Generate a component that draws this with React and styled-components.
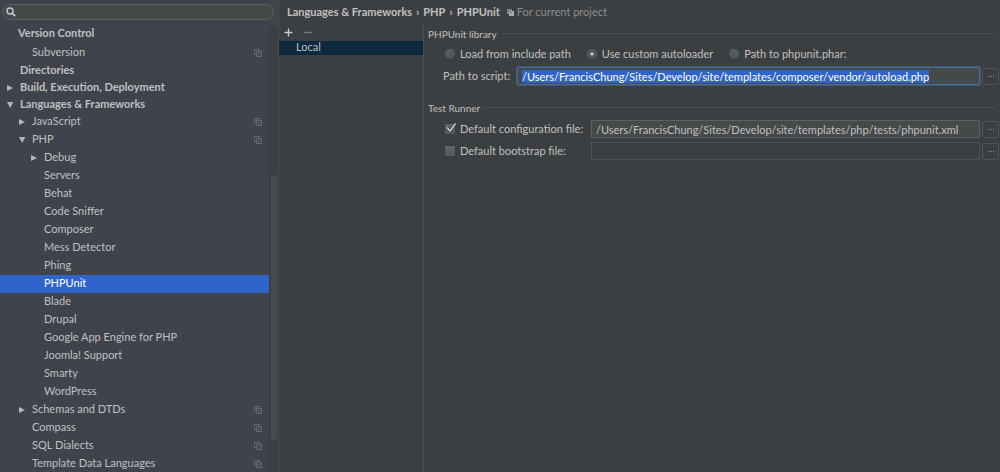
import React, { useEffect, useRef, useState } from 'react';
import styled, { createGlobalStyle } from 'styled-components';

const TREE = [
  { label: 'Subversion', depth: 1, shared: true },
  { label: 'Directories', depth: 0 },
  { label: 'Build, Execution, Deployment', depth: 0, arrow: 'closed' },
  { label: 'Languages & Frameworks', depth: 0, arrow: 'open' },
  { label: 'JavaScript', depth: 1, arrow: 'closed', shared: true },
  { label: 'PHP', depth: 1, arrow: 'open', shared: true },
  { label: 'Debug', depth: 2, arrow: 'closed' },
  { label: 'Servers', depth: 2 },
  { label: 'Behat', depth: 2 },
  { label: 'Code Sniffer', depth: 2 },
  { label: 'Composer', depth: 2 },
  { label: 'Mess Detector', depth: 2 },
  { label: 'Phing', depth: 2 },
  { label: 'PHPUnit', depth: 2 },
  { label: 'Blade', depth: 2 },
  { label: 'Drupal', depth: 2 },
  { label: 'Google App Engine for PHP', depth: 2 },
  { label: 'Joomla! Support', depth: 2 },
  { label: 'Smarty', depth: 2 },
  { label: 'WordPress', depth: 2 },
  { label: 'Schemas and DTDs', depth: 1, arrow: 'closed', shared: true },
  { label: 'Compass', depth: 1, shared: true },
  { label: 'SQL Dialects', depth: 1, shared: true },
  { label: 'Template Data Languages', depth: 1, shared: true },
];

const LOADERS = [
  { id: 'include', label: 'Load from include path' },
  { id: 'autoloader', label: 'Use custom autoloader' },
  { id: 'phar', label: 'Path to phpunit.phar:' },
];

function SearchIcon() {
  return (
    <svg width="10" height="10" viewBox="0 0 10 10" fill="none" stroke="#c4c6c8">
      <circle cx="4" cy="4" r="3" strokeWidth="1.4" />
      <path d="M6.2 6.2L9.2 9.2" strokeWidth="1.8" />
    </svg>
  );
}

function Arrow({ open }) {
  return (
    <svg width="8" height="8" viewBox="0 0 8 8" fill="#b4b6b8">
      <path d={open ? 'M1 1H7.4L4.2 7Z' : 'M1 1L7 4L1 7Z'} />
    </svg>
  );
}

function SharedIcon() {
  return (
    <svg width="8" height="8" viewBox="0 0 8 8" fill="none" stroke="#666a71">
      <path d="M2 5.5H0.5V0.5H5.5V2" />
      <path d="M2.5 2.5H7.5V7.5H2.5Z" />
      <path d="M4 4.5H6M4 6H6" strokeWidth="0.8" />
    </svg>
  );
}

function ProjectIcon() {
  return (
    <svg width="7" height="7" viewBox="0 0 7 7">
      <path d="M0 0H5V2H2V5H0Z" fill="#85888b" />
      <path d="M2 2H7V7H2Z" fill="#a9acae" />
      <path d="M1.5 1.5L4.5 4.5" stroke="#5d6164" />
    </svg>
  );
}

function Dots() {
  return (
    <svg width="6" height="1" viewBox="0 0 6 1" fill="#96989a">
      <path d="M0 0H1V1H0ZM2.5 0H3.5V1H2.5ZM5 0H6V1H5Z" />
    </svg>
  );
}

function Tick() {
  return (
    <TickMark width="12" height="12" viewBox="0 0 12 12" fill="none">
      <path d="M2 5.5L5 9L10.5 1.5" stroke="#2c2e2f" strokeWidth="2.6" />
      <path d="M2 5.5L5 9L10.5 1.5" stroke="#d0d2d3" strokeWidth="1.5" />
    </TickMark>
  );
}

function App() {
  const [selected, setSelected] = useState('PHPUnit');
  const [loader, setLoader] = useState('autoloader');
  const [script, setScript] = useState(
    '/Users/FrancisChung/Sites/Develop/site/templates/composer/vendor/autoload.php',
  );
  const [config, setConfig] = useState(
    '/Users/FrancisChung/Sites/Develop/site/templates/php/tests/phpunit.xml',
  );
  const [useConfig, setUseConfig] = useState(true);
  const [bootstrap, setBootstrap] = useState('');
  const [useBootstrap, setUseBootstrap] = useState(false);
  const scriptRef = useRef(null);

  useEffect(() => {
    scriptRef.current.focus();
    scriptRef.current.select();
  }, []);

  return (
    <>
      <GlobalStyle />
      <Window>
        <Sidebar>
          <SearchBox>
            <SearchIcon />
            <SearchInput type="search" aria-label="Search settings" />
          </SearchBox>
          <TreeArea>
            <TreePane>
              <TreeHeading>Version Control</TreeHeading>
              <TreeList>
                {TREE.map((item) => (
                  <li key={item.label}>
                    <TreeRow
                      type="button"
                      $depth={item.depth}
                      $selected={item.label === selected}
                      onClick={() => setSelected(item.label)}
                    >
                      <ArrowSlot>
                        {item.arrow && <Arrow open={item.arrow === 'open'} />}
                      </ArrowSlot>
                      <TreeLabel>{item.label}</TreeLabel>
                      {item.shared && <SharedIcon />}
                    </TreeRow>
                  </li>
                ))}
              </TreeList>
            </TreePane>
            <ScrollTrack>
              <ScrollThumb />
            </ScrollTrack>
          </TreeArea>
        </Sidebar>

        <Main>
          <Breadcrumb>
            <BreadcrumbPath>
              <span>Languages &amp; Frameworks</span>
              <span>›</span>
              <span>PHP</span>
              <span>›</span>
              <span>PHPUnit</span>
            </BreadcrumbPath>
            <ProjectIcon />
            <BreadcrumbNote>For current project</BreadcrumbNote>
          </Breadcrumb>
          <Content>
            <Profiles>
              <Toolbar>
                <ToolButton type="button" aria-label="Add">
                  <svg width="9" height="9" viewBox="0 0 9 9" stroke="#c8cacb">
                    <path d="M4.5 0.5V8.5M0.5 4.5H8.5" strokeWidth="1.4" />
                  </svg>
                </ToolButton>
                <ToolButton type="button" aria-label="Remove" disabled>
                  <svg width="9" height="9" viewBox="0 0 9 9" stroke="#77797b">
                    <path d="M0.5 4.5H8.5" strokeWidth="1.4" />
                  </svg>
                </ToolButton>
              </Toolbar>
              <ProfileButton type="button">Local</ProfileButton>
            </Profiles>

            <Form>
              <Group>
                <GroupTitle>PHPUnit library</GroupTitle>
                <RadioRow role="radiogroup" aria-label="PHPUnit library">
                  {LOADERS.map((item) => (
                    <OptionLabel key={item.id}>
                      <Radio
                        type="radio"
                        name="loader"
                        checked={loader === item.id}
                        onChange={() => setLoader(item.id)}
                      />
                      {item.label}
                    </OptionLabel>
                  ))}
                </RadioRow>
                <ScriptRow>
                  <label htmlFor="script">Path to script:</label>
                  <TextInput
                    id="script"
                    ref={scriptRef}
                    type="text"
                    spellCheck={false}
                    value={script}
                    onChange={(e) => setScript(e.target.value)}
                  />
                  <BrowseButton type="button" aria-label="Browse script">
                    <Dots />
                  </BrowseButton>
                </ScriptRow>
              </Group>

              <Group>
                <GroupTitle>Test Runner</GroupTitle>
                <FileRows>
                  <FileRow>
                    <OptionLabel>
                      <CheckSlot>
                        <Checkbox
                          type="checkbox"
                          checked={useConfig}
                          onChange={(e) => setUseConfig(e.target.checked)}
                        />
                        {useConfig && <Tick />}
                      </CheckSlot>
                      Default configuration file:
                    </OptionLabel>
                    <TextInput
                      type="text"
                      aria-label="Configuration file path"
                      disabled={!useConfig}
                      value={config}
                      onChange={(e) => setConfig(e.target.value)}
                    />
                    <BrowseButton type="button" aria-label="Browse configuration">
                      <Dots />
                    </BrowseButton>
                  </FileRow>
                  <FileRow>
                    <OptionLabel>
                      <CheckSlot>
                        <Checkbox
                          type="checkbox"
                          checked={useBootstrap}
                          onChange={(e) => setUseBootstrap(e.target.checked)}
                        />
                        {useBootstrap && <Tick />}
                      </CheckSlot>
                      Default bootstrap file:
                    </OptionLabel>
                    <TextInput
                      type="text"
                      aria-label="Bootstrap file path"
                      disabled={!useBootstrap}
                      value={bootstrap}
                      onChange={(e) => setBootstrap(e.target.value)}
                    />
                    <BrowseButton type="button" aria-label="Browse bootstrap">
                      <Dots />
                    </BrowseButton>
                  </FileRow>
                </FileRows>
              </Group>
            </Form>
          </Content>
        </Main>
      </Window>
    </>
  );
}

export default App;

const GlobalStyle = createGlobalStyle`
  * {
    box-sizing: border-box;
  }

  body {
    margin: 0;
    background-color: #3c3f41;
  }

  body,
  button,
  input {
    font-family: Lato, 'Noto Sans', sans-serif;
    font-size: 11px;
    line-height: 12px;
    color: #c0c0c0;
  }

  button,
  input {
    margin: 0;
    padding: 0;
    border: none;
    background: none;
  }

  svg {
    display: block;
    flex-shrink: 0;
  }
`;

const Window = styled.div`
  height: 100vh;
  overflow: hidden;

  display: flex;
`;

const Sidebar = styled.aside`
  width: 279px;
  flex-shrink: 0;
  border-right: 1px solid #4a4d4f;
  background-color: #3f434c;

  display: flex;
  flex-direction: column;
`;

const SearchBox = styled.div`
  height: 16px;
  margin: 4px 4px 4px 2px;
  padding: 0 8px 0 3px;
  flex-shrink: 0;

  background-color: #45494a;
  border: 1px solid #5e6162;
  border-radius: 8px;

  display: flex;
  align-items: center;
  gap: 4px;
`;

const SearchInput = styled.input`
  flex: 1;
  min-width: 0;
  appearance: none;

  &:focus {
    outline: none;
  }
`;

const TreeArea = styled.div`
  flex: 1;
  min-height: 0;

  display: flex;
`;

const TreePane = styled.nav`
  flex: 1;
  overflow: hidden;
`;

const TreeHeading = styled.div`
  height: 20px;
  padding-left: 18px;
  line-height: 18px;
  font-weight: bold;
`;

const TreeList = styled.ul`
  margin: 0;
  padding: 0;
  list-style: none;
`;

const TreeRow = styled.button`
  width: 100%;
  height: ${({ $depth }) => ($depth === 0 ? 17 : 18)}px;
  padding: 0 7px 0 ${({ $depth }) => 6 + $depth * 12}px;

  background-color: ${({ $selected }) => ($selected ? '#2f65ca' : 'transparent')};
  color: ${({ $selected }) => ($selected ? '#ffffff' : '#c0c0c0')};
  font-weight: ${({ $depth }) => ($depth === 0 ? 'bold' : 'normal')};
  text-align: left;

  display: flex;
  align-items: center;
`;

const ArrowSlot = styled.span`
  width: 14px;
  flex-shrink: 0;
`;

const TreeLabel = styled.span`
  flex: 1;
  padding-bottom: 2px;
  white-space: nowrap;
`;

const ScrollTrack = styled.div`
  width: 9px;
  margin-top: 2px;
  padding: 149px 1px 32px 2px;

  background-color: #3c3f41;

  display: flex;
`;

const ScrollThumb = styled.div`
  flex: 1;
  border-radius: 3px;
  background-color: #4b4c4d;
`;

const Main = styled.main`
  flex: 1;
  min-width: 0;

  display: flex;
  flex-direction: column;
`;

const Breadcrumb = styled.header`
  height: 24px;
  padding-left: 8px;

  display: flex;
  align-items: center;
`;

const BreadcrumbPath = styled.h1`
  margin: 0 7px 0 0;
  font-size: 11px;
  font-weight: bold;
  white-space: nowrap;

  display: flex;
  gap: 4px;
`;

const BreadcrumbNote = styled.span`
  margin-left: 3px;
  color: #8c8e90;
  white-space: nowrap;
`;

const Content = styled.div`
  flex: 1;

  display: flex;
`;

const Profiles = styled.section`
  width: 145px;
  flex-shrink: 0;
  border-right: 1px solid #4a4d4f;
`;

const Toolbar = styled.div`
  height: 17px;
  padding-left: 5px;

  display: flex;
  align-items: center;
  gap: 10px;
`;

const ToolButton = styled.button`
  width: 9px;
  height: 9px;
`;

const ProfileButton = styled.button`
  width: 100%;
  height: 14px;
  padding: 0 0 2px 17px;

  background-color: #0d293e;
  text-align: left;
`;

const Form = styled.form`
  flex: 1;
  min-width: 0;
  padding: 2px 1px 0 4px;

  display: flex;
  flex-direction: column;
  gap: 15px;
`;

const Group = styled.section`
  display: flex;
  flex-direction: column;
`;

const GroupTitle = styled.h2`
  height: 15px;
  margin: 0 4px 0 0;
  font-size: 10px;
  font-weight: normal;

  display: flex;
  align-items: center;
  gap: 5px;

  &::after {
    content: '';
    flex: 1;
    height: 1px;
    background-color: #4d5052;
  }
`;

const OptionLabel = styled.label`
  white-space: nowrap;

  display: flex;
  align-items: center;
  gap: 5px;
`;

const RadioRow = styled.div`
  height: 26px;
  padding-left: 17px;

  display: flex;
  align-items: center;
  gap: 16px;
`;

const Radio = styled.input`
  appearance: none;
  width: 10px;
  height: 10px;
  flex-shrink: 0;
  border-radius: 50%;
  background: linear-gradient(#5b5f61, #505355);

  &:checked {
    background: radial-gradient(circle, #c8cacb 0 1px, #55585a 2px);
  }
`;

const ScriptRow = styled.div`
  height: 18px;
  padding-left: 15px;

  display: grid;
  grid-template-columns: 72px 1fr 17px;
  align-items: center;
  column-gap: 2px;
  white-space: nowrap;
`;

const FileRows = styled.div`
  padding: 5px 0 0 17px;

  display: flex;
  flex-direction: column;
  gap: 4px;
`;

const FileRow = styled.div`
  height: 18px;

  display: grid;
  grid-template-columns: 144px 1fr 17px;
  align-items: center;
  column-gap: 2px;
`;

const CheckSlot = styled.span`
  position: relative;
`;

const Checkbox = styled.input`
  appearance: none;
  width: 10px;
  height: 10px;
  border-radius: 1px;
  background: linear-gradient(#626566, #56595a);

  display: block;
`;

const TickMark = styled.svg`
  position: absolute;
  left: 0;
  bottom: 0;
  pointer-events: none;
`;

const TextInput = styled.input`
  width: 100%;
  min-width: 0;
  height: 18px;
  padding: 0 4px;

  background-color: #45494a;
  border: 1px solid #5e6162;

  &:focus {
    outline: none;
    border: 1px solid #466d94;
    border-radius: 2px;
    box-shadow: 0 0 0 1px #3d5a78;
  }

  &:disabled {
    background-color: #3c3f41;
    border-color: #4e5153;
  }

  &::selection {
    background-color: #2f65ca;
    color: #ffffff;
  }
`;

const BrowseButton = styled.button`
  height: 17px;
  border: 1px solid #515456;
  border-radius: 2px;

  display: flex;
  align-items: center;
  justify-content: center;
`;
